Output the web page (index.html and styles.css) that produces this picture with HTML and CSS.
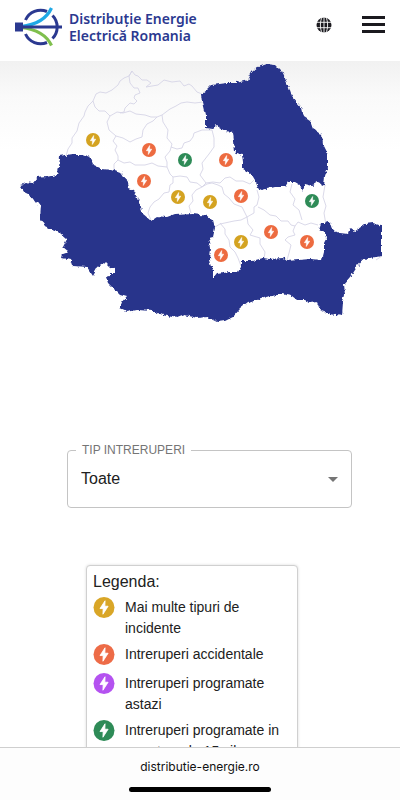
FILE: index.html
```html
<!DOCTYPE html>
<html lang="ro">
<head>
<meta charset="utf-8">
<meta name="viewport" content="width=device-width, initial-scale=1">
<title>Distribuție Energie Electrică Romania</title>
<link rel="stylesheet" href="styles.css">
</head>
<body>
<svg class="defs" aria-hidden="true">
  <symbol id="bolt" viewBox="-10 -10 20 20">
    <circle r="10"/>
    <path d="M1 -6.4L-3.8 1H-.8L-1 6.4L3.9 -1.2H.8Z" fill="#fff" stroke="#fff" stroke-width=".8" stroke-linejoin="round"/>
  </symbol>
</svg>
<header class="header">
  <a class="brand" href="#">
    <svg class="brand-mark" viewBox="0 0 48 40" aria-hidden="true">
      <g fill="none">
        <path d="M10.500 13A16.500 16.500 0 0 1 32 4.500M37.500 8.500A16.500 16.500 0 0 1 37.500 31.500M32 35.500A16.500 16.500 0 0 1 10.500 27" stroke="#2b3990" stroke-width="3"/>
        <path d="M6 19.500C20 18 31 13 36.500 1" stroke="#1fa9e6" stroke-width="3.200"/>
        <path d="M6 20.500C20 22 31 27 36.500 38.500" stroke="#7fbf4d" stroke-width="3.200"/>
        <path d="M6 20H47" stroke="#2b3990" stroke-width="3.200"/>
      </g>
      <path d="M0 15.500H8V24.500H0Z" fill="#2b3990"/>
    </svg>
    <span class="brand-name">Distribuție Energie<br>Electrică Romania</span>
  </a>
  <nav class="actions">
    <button class="icon-button" type="button" aria-label="Limba">
      <svg class="globe" viewBox="0 0 16 16" aria-hidden="true">
        <circle cx="8" cy="8" r="7.500" fill="#1b1a1f"/>
        <path d="M0 5.300H16M0 10.700H16M8 0V16M6.200 0C3.800 4 3.800 12 6.200 16M9.800 0C12.200 4 12.200 12 9.800 16" fill="none" stroke="#fff" stroke-width=".9"/>
      </svg>
    </button>
    <button class="icon-button" type="button" aria-label="Meniu">
      <svg class="burger" viewBox="0 0 23 18" aria-hidden="true"><path d="M0 1.500H23M0 8.500H23M0 15.500H23" stroke="#1b1a1f" stroke-width="3"/></svg>
    </button>
  </nav>
</header>
<main class="content">
  <svg class="map" viewBox="0 61 400 271" role="img" aria-label="Harta intreruperilor">
    <filter id="rough" x="0" y="0" width="100%" height="100%" color-interpolation-filters="sRGB">
      <feTurbulence type="turbulence" baseFrequency=".15" numOctaves="2" seed="4" result="n"/>
      <feColorMatrix in="n" values="1 0 0 0 .3  0 1 0 0 .3  0 0 1 0 0  0 0 0 0 1" result="m"/>
      <feDisplacementMap in="SourceGraphic" in2="m" scale="4" xChannelSelector="R" yChannelSelector="G"/>
    </filter>
    <g fill="none" stroke="#d6d5e6" stroke-width=".9" stroke-linejoin="round">
      <path d="M66 156L68 149L72 143L72 138L77 131L79 123L84 116L85 112L88 106L93 101L96 94L100 92L106 93L112 90L118 85L120 81L124 78L129 76L132 71L135 75L138 76L142 80L147 80L151 83L146 87L152 86L158 85L164 80L172 82L180 81L184 86L189 84L192 86L197 92L202 94"/>
      <path d="M130 83L134 88L138 88L140 93L135 95L134 98L137 101L134 104L130 103L125 108L124 112L120 113M132 71L129 76L130 83"/>
      <path d="M93 101L95 107L99 111L105 111L110 116L117 112L123 113L130 111L136 114L145 115L151 117L157 117L162 115L170 109L176 106L181 103L187 102L195 103L203 102"/>
      <path d="M110 116L107 122L109 130L116 136L123 138L130 142L136 139L142 137L143 130L147 124L153 121L157 117"/>
      <path d="M162 115L163 122L168 130L167 138L172 144L170 151L165 157L167 162L167 167L170 174L173 177M171 147L177 149L182 148L184 143L190 141L193 137L194 133L202 130L212 130L214 138L214 147L209 154L202 163L203 169L200 175"/>
      <path d="M116 136L113 141L117 146L115 150L118 156L118 160L114 164L114 170M118 160L124 163L130 162L135 165L145 165L152 163L158 166L167 167"/>
      <path d="M151 220L148 213L150 207L154 202L159 199L164 193L169 192L170 185L173 183L173 177L180 176L187 177L190 182L197 183L202 187L196 190L192 195L193 201L189 206L191 213"/>
      <path d="M200 175L206 183L202 187L207 184L212 183L218 185L222 187L224 194L229 198L234 204L242 207L245 213L247 217L241 220L234 221L220 224L215 227M206 183L213 182L220 183L225 178L230 177L236 181L243 181L250 184L254 180"/>
      <path d="M257 190L259 197L257 205L254 207L254 213L247 217L248 224L253 230L250 235L260 238L260 244L265 252L264 259M258 207L264 210L270 215L276 216L281 221L288 221L291 225L295 226L298 222L305 225L311 223L318 225M292 184L290 192L295 199L293 205L299 210L302 220"/>
      <path d="M325 185L323 197L326 206L324 213L326 225M295 226L293 231L295 235L288 237L285 240L291 245L289 253L287 260M220 223L225 229L225 234L229 240L230 247L235 252L238 258L241 266M376 260L382 256"/>
    </g>
    <g filter="url(#rough)" fill="#28348b">
      <path d="M202 94L207 90L212 85L227 83L236 83L248 80L252 72L258 67L267 64L275 65L282 72L288 85L292 97L302 109L304 117L310 121L313 129L322 135L323 145L328 155L328 168L325 177L324 186L318 183L313 186L305 184L303 191L300 185L295 182L288 182L285 187L275 187L263 190L258 188L255 180L252 175L243 170L243 163L242 155L235 152L234 142L233 132L225 131L217 126L213 129L206 128L206 115L203 102Z"/>
      <path d="M60 157L73 155L82 155L91 158L94 165L102 169L112 170L123 174L128 182L129 189L134 191L138 197L141 207L142 213L151 221L157 217L167 218L175 215L193 214L208 216L213 220L215 228L213 237L209 238L211 248L210 260L213 270L213 279L217 274L230 272L238 272L241 267L241 261L252 261L263 258L270 259L283 258L287 261L310 259L322 260L324 252L324 243L326 239L325 233L319 230L321 224L325 224L327 222L330 223L332 229L340 233L348 234L350 229L354 232L365 224L373 223L382 226L382 256L370 258L362 261L355 270L350 278L344 285L345 295L343 303L342 316L330 314L320 310L317 302L310 303L305 300L297 300L292 296L282 294L267 297L258 300L248 303L240 309L233 317L225 321L218 322L208 317L197 318L185 315L177 318L163 315L153 311L137 310L127 312L120 309L122 303L127 297L120 295L113 288L108 283L106 277L110 276L110 273L115 273L115 269L110 268L105 263L98 267L93 276L87 267L73 266L71 260L62 258L63 254L69 252L63 247L67 239L60 233L52 230L45 226L40 220L41 205L37 204L30 195L24 192L20 185L27 183L33 184L38 178L47 177L57 175L59 167Z"/>
    </g>
    <g fill="#d4a321">
      <use href="#bolt" x="86" y="133" width="14" height="14"/>
      <use href="#bolt" x="171" y="190" width="14" height="14"/>
      <use href="#bolt" x="203" y="195" width="14" height="14"/>
      <use href="#bolt" x="234" y="235" width="14" height="14"/>
    </g>
    <g fill="#ed6b40">
      <use href="#bolt" x="142" y="143" width="14" height="14"/>
      <use href="#bolt" x="219" y="153" width="14" height="14"/>
      <use href="#bolt" x="137" y="174" width="14" height="14"/>
      <use href="#bolt" x="234" y="189" width="14" height="14"/>
      <use href="#bolt" x="264" y="225" width="14" height="14"/>
      <use href="#bolt" x="300" y="235" width="14" height="14"/>
      <use href="#bolt" x="214" y="248" width="14" height="14"/>
    </g>
    <g fill="#2e8b57">
      <use href="#bolt" x="178" y="153" width="14" height="14"/>
      <use href="#bolt" x="305" y="194" width="14" height="14"/>
    </g>
  </svg>
  <fieldset class="field">
    <legend class="field-legend"><label for="tip">TIP INTRERUPERI</label></legend>
    <div class="select-row">
      <select class="select" id="tip"><option>Toate</option></select>
      <svg class="arrow" viewBox="0 0 10 5" aria-hidden="true"><path d="M0 0H10L5 5Z" fill="#757575"/></svg>
    </div>
  </fieldset>
  <section class="card">
    <h2 class="card-title">Legenda:</h2>
    <ul class="items">
      <li class="item"><svg class="badge yellow" aria-hidden="true"><use href="#bolt"/></svg>Mai multe tipuri de incidente</li>
      <li class="item"><svg class="badge orange" aria-hidden="true"><use href="#bolt"/></svg>Intreruperi accidentale</li>
      <li class="item"><svg class="badge purple" aria-hidden="true"><use href="#bolt"/></svg>Intreruperi programate astazi</li>
      <li class="item"><svg class="badge green" aria-hidden="true"><use href="#bolt"/></svg>Intreruperi programate in urmatoarele 15 zile</li>
    </ul>
  </section>
</main>
<footer class="browser-bar">
  <span class="address">distributie-energie.ro</span>
  <span class="home-indicator"></span>
</footer>
</body>
</html>
```
FILE: styles.css
```css
* { box-sizing: border-box; }

body {
  margin: 0;
  height: 100vh;
  display: flex;
  flex-direction: column;
  overflow: hidden;
  background: #fff;
  color: #212121;
  font-family: "Liberation Sans", Arial, sans-serif;
}

.defs { position: absolute; width: 0; height: 0; }

.header {
  flex: none;
  display: flex;
  align-items: flex-start;
  justify-content: space-between;
  padding: 7px 15px;
  height: 61px;
  background: #fff;
}

.brand { display: flex; align-items: center; gap: 6px; text-decoration: none; }
.brand-mark { width: 48px; height: 40px; }
.brand-name {
  font: 600 14px/17px "Noto Sans", "Open Sans", sans-serif;
  color: #2b3990;
  white-space: nowrap;
}

.actions { display: flex; align-items: center; gap: 30px; height: 36px; }
.icon-button { display: flex; padding: 0; border: 0; background: none; }
.globe { width: 16px; height: 16px; }
.burger { width: 23px; height: 18px; }

.content {
  flex: 1;
  min-height: 0;
  overflow: hidden;
  display: flex;
  flex-direction: column;
  align-items: center;
  background: linear-gradient(#f1f1f1, #fafafa 36px, #fff 90px);
}

.map { flex: none; display: block; width: 100%; max-width: 560px; }

.field {
  flex: none;
  width: 71%;
  min-width: 285px;
  margin: 111px 0 0 19px;
  padding: 0 13px 6px 8px;
  border: 1px solid #c4c4c4;
  border-radius: 4px;
}
.field-legend { padding: 0 6px; font-size: 12px; line-height: 14px; color: #757575; }
.select-row { display: flex; align-items: center; height: 44px; padding-left: 5px; }
.select {
  flex: 1;
  appearance: none;
  padding: 0;
  border: 0;
  background: none;
  color: #212121;
  font: 16px/24px "Liberation Sans", Arial, sans-serif;
}
.arrow { width: 10px; height: 5px; }

.card {
  flex: none;
  width: 53%;
  min-width: 212px;
  margin: 57px 16px 0 0;
  padding: 6px;
  border: 1px solid #d0d0d0;
  border-radius: 4px;
  background: #fff;
  box-shadow: 0 0 3px rgba(0, 0, 0, 0.15);
}
.card-title { margin: 0; font-size: 16px; line-height: 20px; font-weight: 400; }
.items { display: flex; flex-direction: column; gap: 5px; margin: 5px 0 0; padding: 0; list-style: none; }
.item {
  display: grid;
  grid-template-columns: 22px 1fr;
  gap: 10px;
  min-height: 24px;
  font-size: 14px;
  line-height: 21px;
}
.badge { width: 22px; height: 21px; }
.yellow { fill: #d9a627; }
.orange { fill: #ed6b47; }
.purple { fill: #b452f0; }
.green { fill: #2e8b57; }

.browser-bar {
  flex: none;
  display: flex;
  flex-direction: column;
  align-items: center;
  gap: 10px;
  padding: 9px 0 8px;
  border-top: 1px solid #cfcfcf;
  background: #fdfdfd;
}
.address { font: 12px/20px Inter, sans-serif; color: #111; }
.home-indicator { width: 142px; height: 5px; border-radius: 3px; background: #000; }
```
